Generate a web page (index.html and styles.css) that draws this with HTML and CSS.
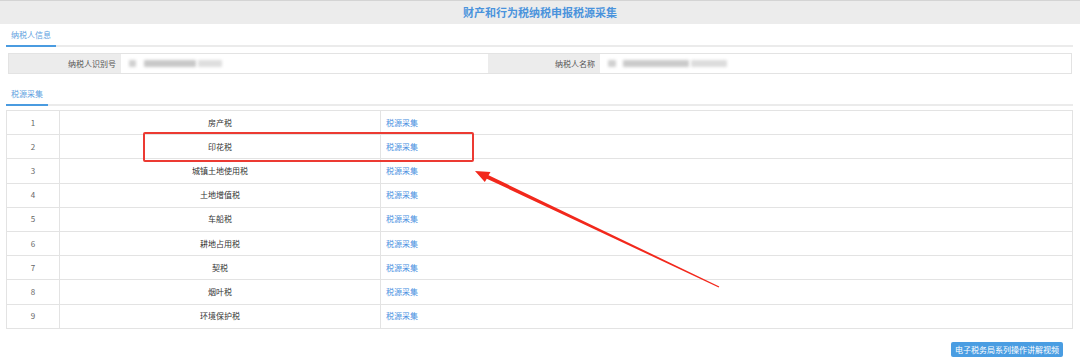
FILE: index.html
```html
<!DOCTYPE html>
<html lang="zh">
<head>
<meta charset="utf-8">
<title>财产和行为税纳税申报税源采集</title>
<link rel="stylesheet" href="styles.css">
</head>
<body>
<div class="header"><h1 class="title">财产和行为税纳税申报税源采集</h1></div>
<div class="main">
  <div class="tabbar tabbar-first"><span class="tab">纳税人信息</span></div>
  <div class="info">
    <div class="label">纳税人识别号</div>
    <div class="value"><span class="blur b1"></span><span class="blur b2"></span><span class="blur b3"></span></div>
    <div class="label">纳税人名称</div>
    <div class="value"><span class="blur b4"></span><span class="blur b5"></span><span class="blur b6"></span></div>
  </div>
  <div class="tabbar tabbar-second"><span class="tab">税源采集</span></div>
  <table class="grid">
    <colgroup><col class="c1"><col class="c2"><col class="c3"></colgroup>
    <tbody>
      <tr><td class="num">1</td><td class="name">房产税</td><td class="act"><a>税源采集</a></td></tr>
      <tr><td class="num">2</td><td class="name">印花税</td><td class="act"><a>税源采集</a></td></tr>
      <tr><td class="num">3</td><td class="name">城镇土地使用税</td><td class="act"><a>税源采集</a></td></tr>
      <tr><td class="num">4</td><td class="name">土地增值税</td><td class="act"><a>税源采集</a></td></tr>
      <tr><td class="num">5</td><td class="name">车船税</td><td class="act"><a>税源采集</a></td></tr>
      <tr><td class="num">6</td><td class="name">耕地占用税</td><td class="act"><a>税源采集</a></td></tr>
      <tr><td class="num">7</td><td class="name">契税</td><td class="act"><a>税源采集</a></td></tr>
      <tr><td class="num">8</td><td class="name">烟叶税</td><td class="act"><a>税源采集</a></td></tr>
      <tr><td class="num">9</td><td class="name">环境保护税</td><td class="act"><a>税源采集</a></td></tr>
    </tbody>
  </table>
  <div class="footer"><span class="btn">电子税务局系列操作讲解视频</span></div>
</div>
<div class="highlight"></div>
<svg class="arrow" width="1080" height="361" viewBox="0 0 1080 361">
  <polygon fill="#f2281c" points="475,171 490.5,172 488.6,175.3 719.3,286.5 718.7,287.5 486.8,178.7 484.8,182"/>
</svg>
</body>
</html>
```
FILE: styles.css
```css
* { box-sizing: border-box; }
html, body { margin: 0; padding: 0; background: #fff; }
body {
  width: 1080px;
  height: 361px;
  overflow: hidden;
  position: relative;
  font-family: "Noto Sans CJK SC", "Microsoft YaHei", sans-serif;
  font-size: 8px;
  color: #333;
}
.header {
  height: 24px;
  background: #ececec;
  border-top: 1px solid #d4d4d4;
  display: flex;
  align-items: center;
  justify-content: center;
}
.title {
  margin: 0;
  font-size: 11px;
  font-weight: bold;
  color: #4a93dc;
  line-height: 14px;
  padding-bottom: 1px;
}
.main { padding: 0 7px 0 6px; }
.tabbar {
  display: flex;
  border-bottom: 2px solid #ebebeb;
}
.tabbar-first { padding-top: 1px; }
.tabbar-second { padding-top: 9px; }
.tab {
  padding: 0 5px;
  line-height: 20px;
  color: #5f9fe0;
  border-bottom: 2px solid #4a9be0;
  margin-bottom: -2px;
}
.tabbar-second .tab { line-height: 21px; }
.info {
  margin: 6px 1px 0 2px;
  height: 21px;
  border: 1px solid #e3e3e3;
  display: grid;
  grid-template-columns: 112px 367px 112px 1fr;
}
.label {
  background: #ececec;
  text-align: right;
  padding-right: 5px;
  line-height: 19px;
  color: #555;
}
.value {
  display: flex;
  align-items: center;
  padding-left: 8px;
  gap: 2px;
}
.blur {
  height: 7px;
  background: #d0d0d0;
  filter: blur(1.6px);
  border-radius: 1px;
}
.b1 { width: 7px; }
.b2 { width: 52px; margin-left: 6px; background: #c8c8c8; }
.b3 { width: 24px; background: #dedede; }
.b4 { width: 8px; }
.b5 { width: 66px; margin-left: 5px; background: #cacaca; }
.b6 { width: 36px; background: #dcdcdc; }
.grid {
  margin-top: 4px;
  width: 1067px;
  border-collapse: collapse;
  table-layout: fixed;
}
.c1 { width: 53px; }
.c2 { width: 321px; }
.grid td {
  height: 24.2px;
  padding: 0;
  border: 1px solid #e3e3e3;
  line-height: 12px;
}
.num { text-align: center; color: #666; }
.name { text-align: center; }
.grid td.act { padding-left: 5px; }
.act a { color: #4a90df; }
.footer {
  display: flex;
  justify-content: flex-end;
  padding-right: 10px;
  margin-top: 13px;
}
.btn {
  background: #4a9de2;
  color: #fff;
  height: 15px;
  line-height: 15px;
  padding: 0 4px;
  border-radius: 2px;
}
.highlight {
  position: absolute;
  left: 143px;
  top: 132px;
  width: 331px;
  height: 30px;
  border: 2px solid #ec3a32;
  border-radius: 2px;
}
.arrow {
  position: absolute;
  left: 0;
  top: 0;
  pointer-events: none;
}
```
